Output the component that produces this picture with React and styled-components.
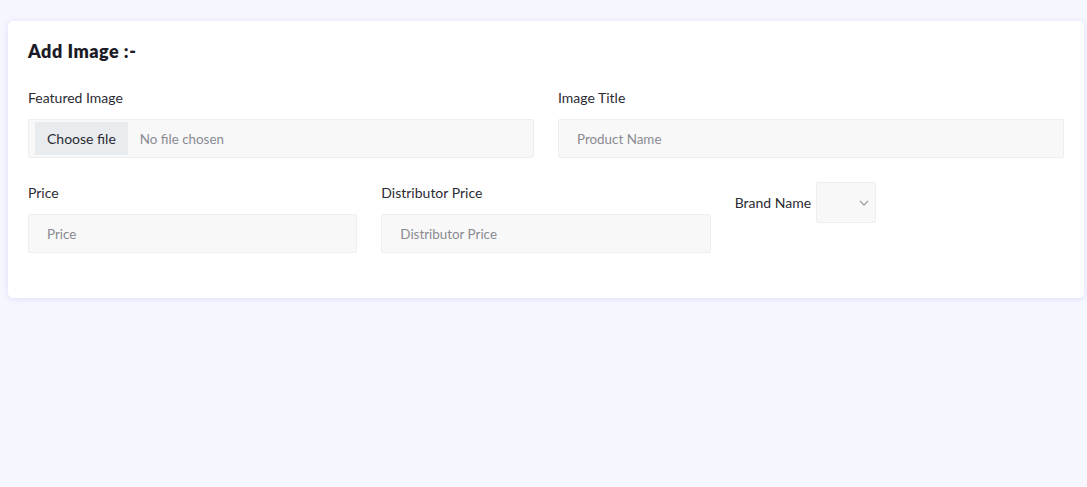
import styled, { createGlobalStyle } from 'styled-components';

const GlobalStyle = createGlobalStyle`
  * {
    box-sizing: border-box;
  }
  body {
    margin: 0;
    background: #f6f6fe;
    font-family: 'Lato', 'Noto Sans', sans-serif;
    color: #2b2b33;
  }
`;

const Page = styled.div`
  min-height: 487px;
  padding: 21px 3px 0 8px;
`;

const Card = styled.div`
  background: #fff;
  border-radius: 5px;
  box-shadow: 0 1px 6px rgba(110, 100, 230, 0.16);
  padding: 20px 20px 20px;
`;

const Heading = styled.h4`
  margin: 0 0 27px;
  font-size: 18px;
  line-height: 20px;
  font-weight: 800;
  letter-spacing: 0.5px;
  color: #1c1c28;
`;

const Row = styled.div`
  display: grid;
  grid-template-columns: repeat(${(p) => p.cols}, 1fr);
  column-gap: 24px;
`;

const Group = styled.div`
  margin-bottom: 25px;
  display: ${(p) => (p.inline ? 'flex' : 'block')};
  align-items: ${(p) => (p.inline ? 'flex-start' : 'normal')};
`;

const Label = styled.label`
  display: block;
  font-size: 14px;
  line-height: 20px;
  margin-bottom: 11px;
  color: #2b2b33;
`;

const InlineLabel = styled.label`
  font-size: 14px;
  line-height: 41px;
  margin-right: 5px;
  margin-top: -1px;
  color: #2b2b33;
`;

const Input = styled.input`
  display: block;
  width: 100%;
  height: 39px;
  padding: 0 18px;
  background: #f8f8f8;
  border: 1px solid #eeeeee;
  border-radius: 2px;
  font-family: inherit;
  font-size: 13.4px;
  color: #2b2b33;
  outline: none;
  &::placeholder {
    color: #8a8a92;
  }
`;

// file picker: the native input stays hidden, the box draws button and status
const FileBox = styled.label`
  display: flex;
  align-items: center;
  height: 39px;
  padding: 2px 6px;
  background: #f8f8f8;
  border: 1px solid #eeeeee;
  border-radius: 2px;
  cursor: pointer;
  input {
    display: none;
  }
`;

const FileButton = styled.span`
  display: flex;
  align-items: center;
  height: 33px;
  padding: 0 12px;
  margin-right: 12px;
  background: #e9ecef;
  font-size: 14px;
  color: #2b2b33;
`;

const FileStatus = styled.span`
  font-size: 13.4px;
  color: #8a8a92;
`;

const Select = styled.select`
  width: 60px;
  height: 41px;
  margin-top: -1px;
  padding: 0 12px;
  background: #f8f8f8
    url("data:image/svg+xml,%3Csvg xmlns='http://www.w3.org/2000/svg' width='10' height='6' viewBox='0 0 10 6'%3E%3Cpath d='M1 1l4 4 4-4' fill='none' stroke='%23a0a0a8' stroke-width='1.3'/%3E%3C/svg%3E")
    no-repeat right 6px center;
  border: 1px solid #eeeeee;
  border-radius: 2px;
  appearance: none;
  font-family: inherit;
  font-size: 13px;
  outline: none;
`;

export default function App() {
  return (
    <Page>
      <GlobalStyle />
      <Card>
        <Heading>Add Image :-</Heading>
        <Row cols={2}>
          <Group>
            <Label>Featured Image</Label>
            <FileBox>
              <input type="file" />
              <FileButton>Choose file</FileButton>
              <FileStatus>No file chosen</FileStatus>
            </FileBox>
          </Group>
          <Group>
            <Label>Image Title</Label>
            <Input placeholder="Product Name" />
          </Group>
        </Row>
        <Row cols={3}>
          <Group>
            <Label>Price</Label>
            <Input placeholder="Price" />
          </Group>
          <Group>
            <Label>Distributor Price</Label>
            <Input placeholder="Distributor Price" />
          </Group>
          <Group inline>
            <InlineLabel>Brand Name</InlineLabel>
            <Select defaultValue="">
              <option value=""></option>
            </Select>
          </Group>
        </Row>
      </Card>
    </Page>
  );
}
